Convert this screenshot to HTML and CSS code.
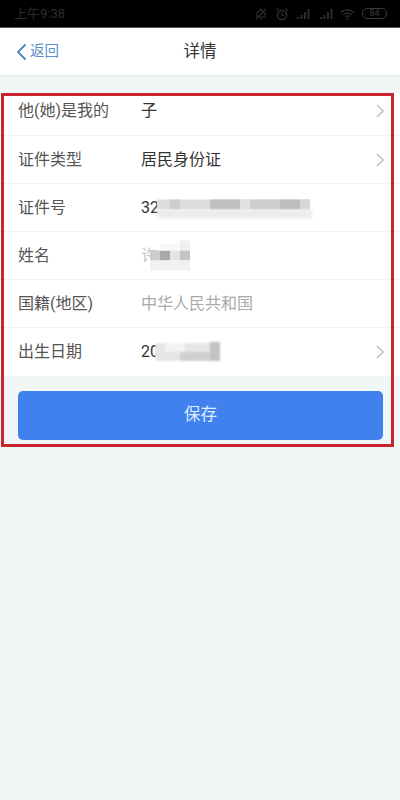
FILE: index.html
```html
<!DOCTYPE html>
<html lang="zh">
<head>
<meta charset="utf-8">
<title>详情</title>
<link rel="stylesheet" href="styles.css">
</head>
<body>
<div class="screen">
  <header class="status">
    <span class="time">上午9:38</span>
    <div class="status-icons">
      <svg class="si" width="14" height="14" viewBox="0 0 14 14"><path d="M7 2 L11 6 V10 H3 V6 Z M2 12 L12 2 M6 12 H8" fill="none" stroke="#2c2c2c" stroke-width="1.2"/></svg>
      <svg class="si" width="14" height="14" viewBox="0 0 14 14"><circle cx="7" cy="8" r="4.6" fill="none" stroke="#333" stroke-width="1.2"/><path d="M7 5.5V8L9 9M1.5 3.5 3.5 1.5M12.5 3.5 10.500 1.500" fill="none" stroke="#333" stroke-width="1.100"/></svg>
      <svg class="si" width="14" height="12" viewBox="0 0 14 12"><path d="M1 9h2v2H1zM4.500 7h2v4h-2zM8 4h2v7H8zM11.500 1h2v10h-2z" fill="#2c2c2c"/></svg>
      <svg class="si sig2" width="14" height="12" viewBox="0 0 14 12"><path d="M1 9h2v2H1zM4.500 7h2v4h-2zM8 4h2v7H8zM11.500 1h2v10h-2z" fill="#2c2c2c"/></svg>
      <svg class="si" width="15" height="12" viewBox="0 0 15 12"><path d="M1 4.500C4.500 1 10.500 1 14 4.500M3.200 6.800C5.500 4.500 9.500 4.500 11.800 6.800M5.300 9C6.500 7.900 8.500 7.900 9.700 9" fill="none" stroke="#333" stroke-width="1.200"/><circle cx="7.500" cy="10.800" r="1" fill="#333"/></svg>
      <span class="battery">84</span>
    </div>
  </header>

  <nav class="nav">
    <a class="back">
      <svg width="11" height="18" viewBox="0 0 11 18"><path d="M9.500 1.500 2 9l7.500 7.500" fill="none" stroke="#4d82bd" stroke-width="1.800"/></svg>
      <span>返回</span>
    </a>
    <h1 class="title">详情</h1>
  </nav>

  <main class="content">
    <section class="list">
      <div class="row first">
        <span class="label">他(她)是我的</span><span class="value">子</span>
        <svg class="chev" width="8" height="14" viewBox="0 0 8 14"><path d="M1 1l6 6-6 6" fill="none" stroke="#c4c6c8" stroke-width="1.600"/></svg>
      </div>
      <div class="row">
        <span class="label">证件类型</span><span class="value">居民身份证</span>
        <svg class="chev" width="8" height="14" viewBox="0 0 8 14"><path d="M1 1l6 6-6 6" fill="none" stroke="#c4c6c8" stroke-width="1.600"/></svg>
      </div>
      <div class="row">
        <span class="label">证件号</span><span class="value">32</span>
        <svg class="mosaic m-id" width="160" height="24" viewBox="0 0 160 24"><rect x="3" y="2.500" width="153" height="10" fill="#dcdcdc"/><rect x="16" y="2.500" width="10" height="10" fill="#cdcdcd"/><rect x="56" y="2.500" width="30" height="10" fill="#bfbfbf"/><rect x="86" y="2.500" width="10" height="10" fill="#e2e2e2"/><rect x="96" y="2.500" width="30" height="10" fill="#cecece"/><rect x="126" y="2.500" width="20" height="10" fill="#bdbdbd"/><rect x="146" y="2.500" width="10" height="10" fill="#d8d8d8"/><g class="soft"><rect x="3" y="12.500" width="155" height="9" fill="#ececec"/></g></svg>
      </div>
      <div class="row">
        <span class="label">姓名</span><span class="value faded">许</span>
        <svg class="mosaic m-name" width="46" height="34" viewBox="0 0 46 34"><rect x="5" y="11.500" width="10" height="10" fill="#cccccc"/><rect x="15" y="11.500" width="10" height="10" fill="#a9a9a9"/><rect x="25" y="11.500" width="10" height="10" fill="#e4e4e4"/><rect x="35" y="11.500" width="10" height="10" fill="#c4c4c4"/><rect x="35" y="1.500" width="10" height="10" fill="#eeeeee"/><rect x="5" y="21.500" width="40" height="10" fill="#f1f1f1"/><rect x="15" y="5" width="20" height="6.500" fill="#f8f8f8"/></svg>
      </div>
      <div class="row">
        <span class="label">国籍(地区)</span><span class="value muted">中华人民共和国</span>
      </div>
      <div class="row last">
        <span class="label">出生日期</span><span class="value">20</span>
        <svg class="mosaic m-date" width="80" height="24" viewBox="0 0 80 24"><g class="soft"><rect x="0" y="3" width="65" height="18" fill="#e6e6e6"/><rect x="10" y="3" width="20" height="9" fill="#f2f2f2"/><rect x="25" y="12" width="40" height="9" fill="#d0d0d0"/><rect x="55" y="2" width="10" height="19" fill="#c2c2c2"/></g></svg>
        <svg class="chev" width="8" height="14" viewBox="0 0 8 14"><path d="M1 1l6 6-6 6" fill="none" stroke="#c4c6c8" stroke-width="1.600"/></svg>
      </div>
    </section>
    <div class="actions"><button class="save">保存</button></div>
  </main>

  <div class="frame"></div>
</div>
</body>
</html>
```

FILE: styles.css
```css
* { box-sizing: border-box; }
html, body { margin: 0; padding: 0; }
body {
  font-family: Roboto, "Noto Sans CJK SC", sans-serif;
  background: #f1f6f7;
}
.screen { position: relative; width: 400px; height: 800px; overflow: hidden; background: #f1f6f7; }

.status {
  height: 28px; background: #000; display: flex; align-items: center;
  justify-content: space-between; padding: 0 13px 0 14px;
  border-bottom: 1px solid #555;
}
.time { color: #2b2b2b; font-size: 13px; line-height: 16px; }
.status-icons { display: flex; align-items: center; gap: 7px; }
.sig2 { margin-left: 2px; }
.battery {
  width: 25px; height: 11px; border: 1px solid #3a3a3a; border-radius: 5px;
  color: #3a3a3a; font-size: 9px; line-height: 9px; text-align: center;
}

.nav {
  position: relative; height: 49px; background: #fff; display: flex;
  align-items: center; justify-content: center;
  border-bottom: 2px solid #e8eaec;
}
.back {
  position: absolute; left: 16px; top: 15px; height: 18px; display: flex; align-items: center;
  gap: 3px; color: #5b8fc9; font-size: 14.500px; line-height: 18px;
}
.title { margin: 0; font-size: 16.500px; font-weight: 400; color: #333; line-height: 20px; }

.content { padding-top: 16px; }
.list { background: #fff; }
.row {
  height: 48px; display: flex; align-items: center; padding: 0 16px 0 18px;
  margin: 0; position: relative;
  border-bottom: 1px solid #f2f3f4;
  font-size: 16px; line-height: 20px;
}
.row.first { height: 43px; padding-bottom: 6px; }
.row.last { border-bottom: none; }
.label { width: 123px; color: #555; flex: none; }
.value { color: #333; }
.value.muted { color: #aaa; }
.value.faded { color: #c4c4c4; }
.chev { margin-left: auto; }
.mosaic { flex: none; }
.soft { filter: blur(1px); }
.m-id { margin-left: -5px; margin-top: 2px; }
.m-name { margin-left: -12px; }
.m-date { margin-left: -4px; }

.actions { padding: 15px 17px 0 18px; }
.save {
  display: block; width: 100%; height: 49px; border: none; border-radius: 5px;
  background: #4081ee; color: #dfeeff; font-family: inherit; font-size: 16.500px;
  line-height: 20px; padding: 0 0 2px;
}

.frame {
  position: absolute; left: 1px; top: 93px; width: 393px; height: 354px;
  border: 3px solid #c9252f; pointer-events: none;
}
```
